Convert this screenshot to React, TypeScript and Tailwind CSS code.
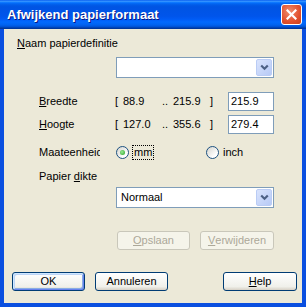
import React from 'react';

function Mn({ c }: { c: string }) {
  return <span className="underline underline-offset-[1px]">{c}</span>;
}

function Chevron() {
  return (
    <svg width="9" height="7" viewBox="0 0 9 7">
      <path d="M1.2 1.5 4.5 4.8 7.8 1.5" fill="none" stroke="#4D6185" strokeWidth="2.2" />
    </svg>
  );
}

function Combo({ value }: { value?: string }) {
  return (
    <div className="ml-[112px] flex h-[21px] w-[158px] items-center border border-[#7F9DB9] bg-white">
      <span className="flex-1 pl-[4px] text-[11px] leading-[13px] text-black">{value}</span>
      <div className="mr-[1px] flex h-[17px] w-[16px] items-center justify-center rounded-[2px] border border-[#BACCF5] bg-[linear-gradient(135deg,#DAE4FD,#B7CAF6)]">
        <Chevron />
      </div>
    </div>
  );
}

function Radio({ checked }: { checked?: boolean }) {
  return (
    <span className="flex h-[13px] w-[13px] shrink-0 items-center justify-center rounded-full border border-[#1C5180] bg-[linear-gradient(135deg,#D4D4CE,#FFFFFF_75%)]">
      {checked && <span className="h-[5px] w-[5px] rounded-full bg-[radial-gradient(circle_at_40%_40%,#9BEA95,#21A121)]" />}
    </span>
  );
}

function Input({ value }: { value: string }) {
  return (
    <div className="flex h-[19px] w-[46px] items-center border border-[#7F9DB9] bg-white pl-[2px] text-[11px] leading-[13px]">
      {value}
    </div>
  );
}

function RangeRow({ label, min, max, value }: { label: React.ReactNode; min: string; max: string; value: string }) {
  return (
    <div className="flex h-[19px] items-center pl-[35px] text-[11px] leading-[13px]">
      <span className="w-[76px]">{label}</span>
      <span className="w-[8px]">[</span>
      <span className="w-[39px]">{min}</span>
      <span className="w-[11px]">..</span>
      <span className="w-[37px]">{max}</span>
      <span className="w-[18px]">]</span>
      <Input value={value} />
    </div>
  );
}

export default function App() {
  return (
    <div className="flex h-[307px] w-[306px] flex-col bg-[#0A4FE0] font-['Liberation_Sans',Arial,sans-serif] text-black">
      {/* Title bar */}
      <div className="flex h-[29px] shrink-0 items-center justify-between pl-[7px] pr-[4px] bg-[linear-gradient(to_bottom,#0058EE_0%,#3A93FF_4%,#288EFF_6%,#127DFF_8%,#036FFC_10%,#0262EE_14%,#0057E5_20%,#0054E3_24%,#0055EB_56%,#005BF5_66%,#026AFE_76%,#0062EF_86%,#0052D6_92%,#0040AB_96%,#003092_100%)]">
        <span className="text-[13px] font-bold leading-[16px] text-white [text-shadow:1px_1px_0_#0A1883]">
          Afwijkend papierformaat
        </span>
        <div className="flex h-[21px] w-[21px] items-center justify-center rounded-[3px] border border-white bg-[radial-gradient(circle_at_40%_35%,#F08D6E,#E2502D_60%,#C8401E)]">
          <svg width="11" height="11" viewBox="0 0 11 11">
            <path d="M1.5 1.5 9.5 9.5M9.5 1.5 1.5 9.5" stroke="white" strokeWidth="2.2" strokeLinecap="square" />
          </svg>
        </div>
      </div>

      {/* Body */}
      <div className="mx-[4px] mb-[4px] flex flex-1 flex-col bg-[#ECE9D8] pt-[8px]">
        <div className="pl-[13px] text-[11px] leading-[13px]">
          <Mn c="N" />aam papierdefinitie
        </div>

        <div className="mt-[7px]">
          <Combo />
        </div>

        <div className="mt-[14px]">
          <RangeRow label={<><Mn c="B" />reedte</>} min="88.9" max="215.9" value="215.9" />
        </div>
        <div className="mt-[4px]">
          <RangeRow label={<><Mn c="H" />oogte</>} min="127.0" max="355.6" value="279.4" />
        </div>

        <div className="mt-[10px] flex h-[16px] items-center pl-[35px] text-[11px] leading-[13px]">
          <span className="w-[77px]">
            <span className="block w-[61px] overflow-hidden whitespace-nowrap">Maateenheid</span>
          </span>
          <span className="flex w-[90px] items-center">
            <Radio checked />
            <span className="ml-[3px] border border-dotted border-black px-[1px] leading-[13px]">mm</span>
          </span>
          <span className="flex items-center">
            <Radio />
            <span className="ml-[4px]">inch</span>
          </span>
        </div>

        <div className="mt-[10px] pl-[35px] text-[11px] leading-[13px]">
          Papier <Mn c="d" />ikte
        </div>

        <div className="mt-[4px]">
          <Combo value="Normaal" />
        </div>

        <div className="mt-[23px] flex gap-[10px] pl-[113px] text-[11px] leading-[13px] text-[#ACA899]">
          <div className="flex h-[19px] w-[73px] items-center justify-center rounded-[3px] border border-[#C9C7BA] bg-[#F5F4EA]">
            <Mn c="O" />pslaan
          </div>
          <div className="flex h-[19px] w-[74px] items-center justify-center rounded-[3px] border border-[#C9C7BA] bg-[#F5F4EA]">
            <Mn c="V" />erwijderen
          </div>
        </div>

        <div className="mt-[22px] flex pl-[8px] text-[11px] leading-[13px]">
          <div className="flex h-[19px] w-[73px] items-center justify-center rounded-[3px] border border-[#003C74] bg-[linear-gradient(to_bottom,#FFFFFF,#F0F0EA_80%,#D6D0C5)] shadow-[inset_1px_1px_0_#CEE7FF,inset_-1px_-1px_0_#6982EE,inset_2px_2px_0_#BCD4F6,inset_-2px_-2px_0_#89ADE4]">
            OK
          </div>
          <div className="ml-[10px] flex h-[19px] w-[73px] items-center justify-center rounded-[3px] border border-[#003C74] bg-[linear-gradient(to_bottom,#FFFFFF,#F0F0EA_80%,#D6D0C5)]">
            Annuleren
          </div>
          <div className="ml-[55px] flex h-[19px] w-[74px] items-center justify-center rounded-[3px] border border-[#003C74] bg-[linear-gradient(to_bottom,#FFFFFF,#F0F0EA_80%,#D6D0C5)]">
            <Mn c="H" />elp
          </div>
        </div>
      </div>
    </div>
  );
}
